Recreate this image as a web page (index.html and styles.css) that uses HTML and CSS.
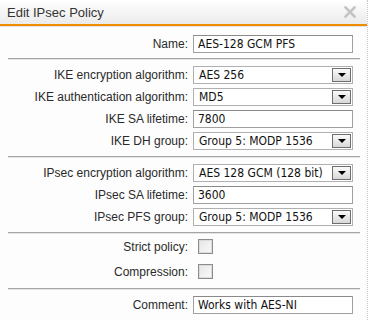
FILE: index.html
```html
<!DOCTYPE html>
<html lang="en">
<head>
  <meta charset="UTF-8" />
  <title>Edit IPsec Policy</title>
  <link rel="stylesheet" href="styles.css">
</head>
<body>
  <div class="dialog">
    <div class="titlebar">
      <span class="title">Edit IPsec Policy</span>
      <svg class="close" width="12" height="12" viewBox="0 0 12 12">
        <path d="M1.5 1.5 L10.5 10.5 M10.5 1.5 L1.5 10.5" stroke="#c4c4c4" stroke-width="2.6" stroke-linecap="square"/>
      </svg>
    </div>

    <div class="section first">
      <label class="lbl">Name:</label>
      <input class="field" type="text" value="AES-128 GCM PFS">
    </div>

    <div class="section">
      <label class="lbl">IKE encryption algorithm:</label>
      <div class="select"><span>AES 256</span><i class="btn"></i></div>
      <label class="lbl">IKE authentication algorithm:</label>
      <div class="select"><span>MD5</span><i class="btn"></i></div>
      <label class="lbl">IKE SA lifetime:</label>
      <input class="field" type="text" value="7800">
      <label class="lbl">IKE DH group:</label>
      <div class="select"><span>Group 5: MODP 1536</span><i class="btn"></i></div>
    </div>

    <div class="section">
      <label class="lbl">IPsec encryption algorithm:</label>
      <div class="select"><span>AES 128 GCM (128 bit)</span><i class="btn"></i></div>
      <label class="lbl">IPsec SA lifetime:</label>
      <input class="field" type="text" value="3600">
      <label class="lbl">IPsec PFS group:</label>
      <div class="select"><span>Group 5: MODP 1536</span><i class="btn"></i></div>
    </div>

    <div class="section checks">
      <label class="lbl">Strict policy:</label>
      <span class="check"></span>
      <label class="lbl">Compression:</label>
      <span class="check"></span>
    </div>

    <div class="section">
      <label class="lbl">Comment:</label>
      <input class="field" type="text" value="Works with AES-NI">
    </div>
  </div>
</body>
</html>
```

FILE: styles.css
```css
body {
  margin: 0;
  background: #fff;
  font-family: "Liberation Sans", Arial, sans-serif;
  font-size: 12px;
  color: #222;
}

.dialog {
  width: 367px;
  height: 320px;
  border-right: 1px dotted #c8c8c8;
  background: #fdfdfd;
}

.titlebar {
  height: 24px;
  display: flex;
  align-items: center;
  justify-content: space-between;
  padding: 0 11px 0 7px;
  background: linear-gradient(#ffffff, #ebebeb);
  border-top-right-radius: 4px;
  border-bottom: 2px solid #f08c00;
  box-shadow: 0 1px 0 #e4e4e4;
}

.title {
  font-size: 13px;
  color: #333;
}

.section {
  margin: 0 7px 0 8px;
  padding: 7px 0 6px;
  display: grid;
  grid-template-columns: 180px 160px;
  column-gap: 5px;
  row-gap: 4px;
  align-items: center;
  border-top: 1px solid #a4a4a4;
  box-shadow: inset 0 1px 0 #e6e6e6;
}

.section.first {
  border-top: none;
  box-shadow: none;
  padding-top: 9px;
  padding-bottom: 5px;
}

.checks {
  row-gap: 10px;
  padding-top: 6px;
  padding-bottom: 9px;
}

.lbl {
  text-align: right;
  color: #2a2a2a;
  white-space: nowrap;
}

.field {
  box-sizing: border-box;
  height: 18px;
  margin: 0;
  padding: 0 4px;
  border: 1px solid #a0a0a0;
  border-top-color: #8a8a8a;
  background: #fff;
  font: 12px "DejaVu Sans Condensed", "DejaVu Sans", Verdana, sans-serif;
  color: #111;
}

.select {
  box-sizing: border-box;
  height: 18px;
  display: flex;
  align-items: center;
  justify-content: space-between;
  padding: 0 1px 0 5px;
  border: 1px solid #b0b0b0;
  background: #fff;
  font: 12px "DejaVu Sans Condensed", "DejaVu Sans", Verdana, sans-serif;
  color: #111;
  white-space: nowrap;
}

.btn {
  box-sizing: border-box;
  flex: none;
  width: 19px;
  height: 14px;
  border: 1px solid #6e6e6e;
  background: linear-gradient(#fafafa, #d8d8d8);
  position: relative;
}

.btn::after {
  content: "";
  position: absolute;
  left: 5px;
  top: 4px;
  border-left: 4px solid transparent;
  border-right: 4px solid transparent;
  border-top: 4px solid #000;
}

.check {
  box-sizing: border-box;
  width: 15px;
  height: 15px;
  margin-left: 5px;
  border: 1px solid #8c8c8c;
  background: linear-gradient(135deg, #e6e6e6, #fafafa);
  box-shadow: inset 0 0 0 1px #dcdcdc;
}
```
